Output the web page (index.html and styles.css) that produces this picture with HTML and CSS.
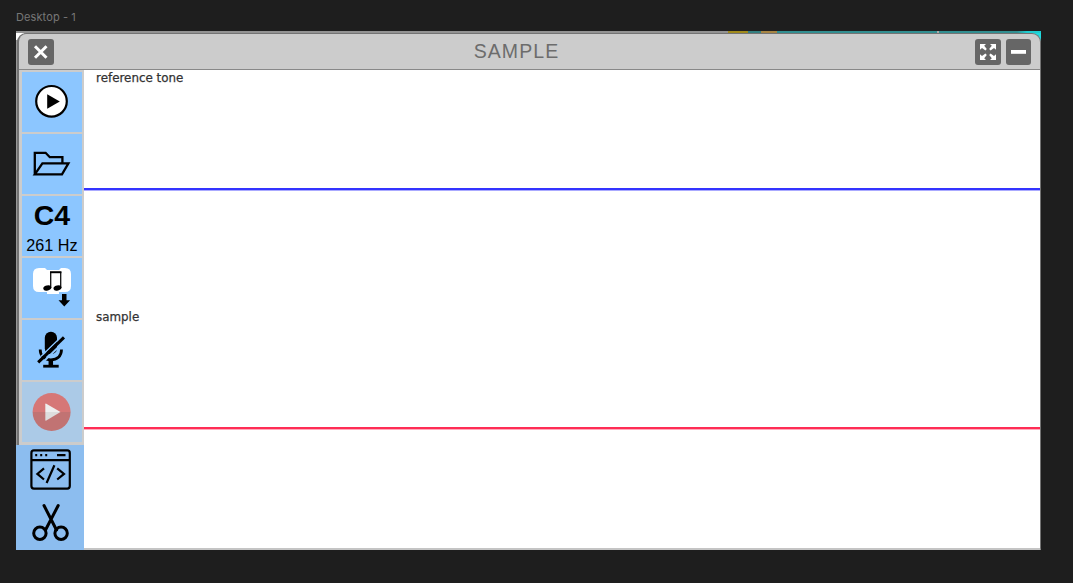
FILE: index.html
```html
<!DOCTYPE html>
<html lang="en">
<head>
<meta charset="utf-8">
<title>Sample</title>
<link rel="stylesheet" href="styles.css">
</head>
<body>
<div class="frame-label">Desktop - 1</div>
<main class="frame">
  <div class="backdrop"><i class="strip-gold"></i><i class="strip-teal"></i><i class="strip-orange"></i><i class="strip-cyan"></i></div>
  <section class="window">
    <header class="titlebar">
      <button class="control" aria-label="Close"><svg width="26" height="26" viewBox="0 0 26 26"><path d="M7 7.2 18.5 18.7M18.5 7.2 7 18.7" stroke="#fff" stroke-width="3"/></svg></button>
      <h1 class="title">SAMPLE</h1>
      <button class="control" aria-label="Expand"><svg width="26" height="26" viewBox="0 0 26 26" fill="#fff"><path id="arrow" d="M5 5h6L9.2 6.8l2.6 3.2-1.4 1.4-3.4-2.5L5 10.8z"/><use href="#arrow" transform="matrix(-1 0 0 1 26 0)"/><use href="#arrow" transform="matrix(1 0 0 -1 0 26)"/><use href="#arrow" transform="matrix(-1 0 0 -1 26 26)"/></svg></button>
      <button class="control narrow" aria-label="Minimize"><svg width="25" height="26" viewBox="0 0 25 26"><path d="M5 11h15v3.8H5z" fill="#fff"/></svg></button>
    </header>
    <div class="body">
      <nav class="sidebar">
        <div class="tools">
          <button class="tool" aria-label="Play"><svg width="60" height="60" viewBox="0 0 60 60"><circle cx="29.5" cy="29.3" r="15.3" fill="#fff" stroke="#000" stroke-width="2.2"/><path d="M25.2 22.3v14.4l12.6-7.2z"/></svg></button>
          <button class="tool" aria-label="Open"><svg width="60" height="60" viewBox="0 0 60 60" fill="none" stroke="#000" stroke-width="2.3"><path d="M12.8 40.3V18.8h10.8l4.2 4.4h12.6v6M12.8 40.3l7.6-11H46.4L40 40.3z"/></svg></button>
          <button class="tool pitch"><strong>C4</strong><span>261 Hz</span></button>
          <button class="tool" aria-label="Save notes"><svg width="60" height="60" viewBox="0 0 60 60"><path d="M17 10h6l2 2h12l2-2h4q6 0 6 6v12q0 6-6 6h-6v2H25v-2h-8q-6 0-6-6V16q0-6 6-6z" fill="#fff"/><path d="M28.7 30V14.2h10V30" fill="none" stroke="#111" stroke-width="1.3"/><path d="M28 13.4h11.4v1.8H28z"/><ellipse cx="25.3" cy="30" rx="4.1" ry="2.5" transform="rotate(-15 25.3 30)"/><ellipse cx="35.5" cy="30" rx="4.1" ry="2.5" transform="rotate(-15 35.5 30)"/><path d="M40 36h4.5v6.3h3.6l-5.8 6.2-5.8-6.2H40z"/></svg></button>
          <button class="tool" aria-label="Microphone"><svg width="60" height="60" viewBox="0 0 60 60"><rect x="22.8" y="11.8" width="12.2" height="22.5" rx="6"/><path d="M18.2 29.5c0 6.8 4.4 10.3 10.6 10.3s10.7-3.5 10.7-10.3" fill="none" stroke="#000" stroke-width="2.8"/><path d="M28.8 39v7" stroke="#000" stroke-width="4.5"/><path d="M21.2 44.8h15.5v2.8H21.2z"/><path d="M19 36.5 40.7 15.5" stroke="#8cc6ff" stroke-width="1.5"/><path d="M20.5 42.5 44.5 19.2" stroke="#8cc6ff" stroke-width="2"/><path d="M16.2 42.4 42 17.4" stroke="#000" stroke-width="3"/></svg></button>
          <button class="tool disabled" aria-label="Record"><svg width="60" height="60" viewBox="0 0 60 60"><path d="M10.6 30a19 19 0 0 1 38 0z" fill="#d67777"/><path d="M10.6 30a19 19 0 0 0 38 0z" fill="#c17373"/><path d="M23.3 22.2q0-1 1-.5L38.5 30H23.3z" fill="#eee"/><path d="M23.3 30h15.2l-14.2 8.6q-1 .5-1-.5z" fill="#ddd"/></svg></button>
        </div>
        <div class="extras">
          <svg width="68" height="52" viewBox="0 1 68 52" fill="none" stroke="#000" stroke-width="2.2"><rect x="15.4" y="6.4" width="38.4" height="38.2" rx="2.5"/><path d="M15.4 16.2h38.4"/><path d="M19.2 11.2h2m3 0h2m3 0h2M41 11.2h8.5"/><path d="M28 24.3l-6.6 5.6 6.6 5.6M41.2 24.3l6.8 5.6-6.8 5.6M38.4 21.2 30.6 39"/></svg>
          <svg width="68" height="48" viewBox="0 0 68 48" fill="none" stroke="#000" stroke-width="3" stroke-linecap="round"><path d="M28 8.5l12.5 24.5M42.2 8.5 29.5 33"/><circle cx="23.9" cy="36.3" r="6.2"/><circle cx="45.1" cy="36.3" r="6.2"/></svg>
        </div>
      </nav>
      <div class="waves">
        <div class="wave tone"><span>reference tone</span></div>
        <div class="wave sample"><span>sample</span></div>
      </div>
    </div>
    <footer class="edge"></footer>
  </section>
</main>
</body>
</html>
```

FILE: styles.css
```css
* { box-sizing: border-box; }
body { margin: 0; height: 583px; overflow: hidden; background: #1e1e1e; font-family: "Liberation Sans", Arial, sans-serif; }
button { border: 0; padding: 0; font: inherit; color: #000; }
svg { display: block; }
.frame-label { height: 31px; padding: 10px 0 0 16px; font: 11px/14px Inter, sans-serif; letter-spacing: .1px; color: #777; }
.frame {
  width: 1025px;
  height: 519px;
  margin-left: 16px;
  background:
    linear-gradient(#fff, #fff) 0 0 / 8px 9px no-repeat,
    linear-gradient(#20dce0, #20dce0) 100% 0 / 12px 10px no-repeat,
    #999;
}
.backdrop { display: flex; height: 2px; background: #929292; padding-left: 712px; }
.strip-gold { width: 20px; background: #a08a1c; }
.strip-teal { width: 13px; background: #347f80; }
.strip-orange { width: 16px; background: #a68443; }
.strip-cyan { flex: 1; background: linear-gradient(90deg, #318e90 0 160px, #aaa 160px 162px, #318e90 162px 240px, #20cdd0 250px); }
.window { display: flex; flex-direction: column; height: 517px; margin-left: 1px; border: solid #737373; border-width: 1px 1px 0 2px; border-radius: 9px 9px 2px 0; background: #ccc; }
.titlebar { display: flex; align-items: center; gap: 4px; height: 36px; padding: 0 9px; border-bottom: 1px solid #888; }
.control { width: 26px; height: 26px; border-radius: 3px; background: #666; }
.narrow { width: 25px; margin-left: 1px; }
.title { flex: 1; margin: 0; padding: 0 0 1px 4px; text-align: center; font-size: 19.5px; line-height: 24px; font-weight: 400; letter-spacing: 1.1px; color: #6c6c6c; }
.body { display: flex; height: 478px; }
.sidebar { width: 65px; background: #ccc; }
.tools { display: grid; grid-auto-rows: 60px; gap: 2px; padding: 2px 2px 0 3px; height: 375px; }
.tool { width: 60px; background: #8cc6ff; }
.disabled { background: #abcae7; }
.pitch { display: flex; flex-direction: column; align-items: center; }
.pitch strong { margin-top: 3px; font-size: 28.5px; line-height: 32px; }
.pitch span { margin-top: 5px; font-size: 16.2px; line-height: 18px; }
.extras { position: relative; width: 68px; height: 105px; margin-left: -3px; background: #8cbdef; }
.waves { flex: 1; background: #fff; }
.wave { height: 120px; padding: 1px 12px; font: 11.9px/14px "DejaVu Sans", sans-serif; color: #333; -webkit-text-stroke: .25px #333; border-bottom: 2px solid #3434ff; box-shadow: 0 1px #aaaaff; }
.sample { margin-top: 119px; border-color: #ff2d55; box-shadow: 0 1px #ffaabb; }
.edge { height: 2px; margin-left: 65px; background: #c4c4c4; }
```
